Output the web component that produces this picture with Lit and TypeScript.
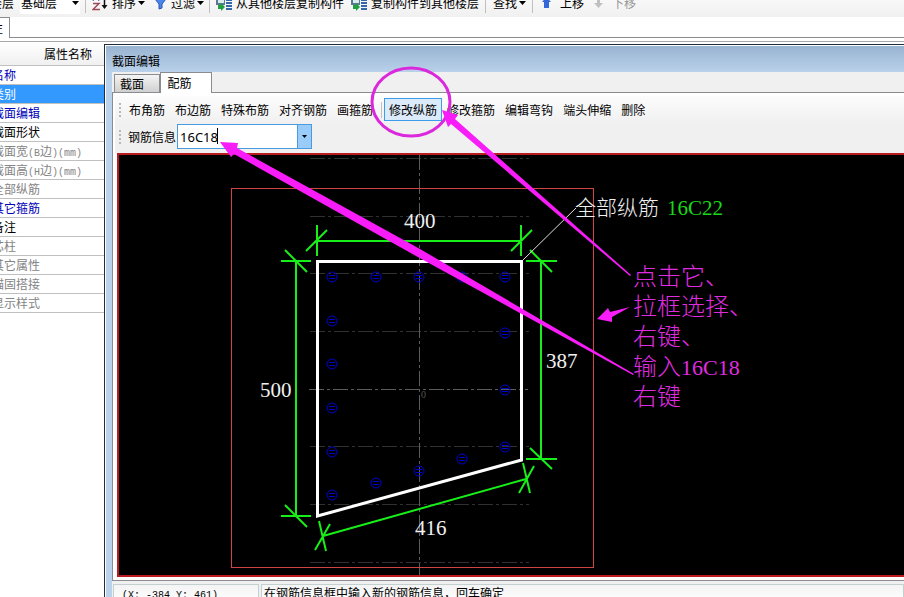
import { LitElement, html, svg, css } from "lit";
import { customElement } from "lit/decorators.js";

const PROPERTIES: { name: unknown; tone: string }[] = [
  { name: "名称", tone: "blue" },
  { name: "类别", tone: "selected" },
  { name: "截面编辑", tone: "blue" },
  { name: "截面形状", tone: "black" },
  { name: html`截面宽<i>(B</i>边<i>)(mm)</i>`, tone: "gray" },
  { name: html`截面高<i>(H</i>边<i>)(mm)</i>`, tone: "gray" },
  { name: "全部纵筋", tone: "gray" },
  { name: "其它箍筋", tone: "blue" },
  { name: "备注", tone: "black" },
  { name: "芯柱", tone: "gray" },
  { name: "其它属性", tone: "gray" },
  { name: "锚固搭接", tone: "gray" },
  { name: "显示样式", tone: "gray" },
];

const BARS: [number, number][] = [
  [332, 277], [376, 277], [419, 277], [462, 277], [505, 277],
  [332, 321], [332, 364], [332, 408], [332, 452], [332, 495],
  [505, 333], [505, 390], [505, 447],
  [462, 459], [419, 471], [376, 483],
];

const GRID_ROWS = [158, 216, 273, 331, 446, 504, 562];

@customElement("section-canvas")
export class SectionCanvas extends LitElement {
  static styles = css`
    :host {
      display: block;
      position: relative;
      z-index: 2;
      background: #000;
      border: 2px solid #b81c20;
      border-right: 0;
      pointer-events: none;
    }
    svg {
      display: block;
      position: absolute;
      left: 0;
      top: 0;
      overflow: visible;
    }
    text {
      font-family: "Liberation Serif", "Noto Sans CJK SC", serif;
      font-weight: 300;
      font-size: 21px;
      fill: #f0f0f0;
    }
    .green { fill: #18d818; }
    .origin { font-size: 10px; fill: #555; }
    .note { font-size: 24px; fill: #e02ce0; }
    .latin { font-size: 22px; }
    .grid { stroke: #303030; stroke-dasharray: 15 3 3 3; }
    .axis { stroke: #5c5c5c; stroke-dasharray: 15 3 3 3; }
    .frame { fill: none; stroke: #d04444; }
    .outline { fill: none; stroke: #fff; stroke-width: 3; }
    .dim { fill: none; stroke: #18ee18; stroke-width: 2; }
    .leader { stroke: #e0e0e0; }
    .bar { fill: none; stroke: #0000d0; }
    .arrow { fill: #f81cf8; }
    .ring { fill: none; stroke: #dc28dc; stroke-width: 3; }
  `;

  render() {
    return html`
      <svg width="785" height="420" viewBox="119 155 785 420" role="img" aria-label="截面">
        ${GRID_ROWS.map((y) => svg`<path class="grid" d="M310 ${y}.5H529" />`)}
        <path class="axis" d="M309 389.5H528M419.5 155V575" />
        <text class="origin" x="421" y="398">0</text>
        ${BARS.map(
          ([x, y]) => svg`<g class="bar">
            <circle cx=${x} cy=${y} r="5" />
            <path d="M${x - 3} ${y - 2}.5h6M${x - 3} ${y + 1}.5h6" />
          </g>`
        )}
        <rect class="frame" x="231.5" y="188.5" width="362" height="379" />
        <path class="outline" d="M317.500 261.500H521.500V460L317.500 516Z" />
        <path
          class="dim"
          d="M317 241H521M317 225V256M306 251L327 230M521 225V256M511 251L532 230
             M296 261V516M281 261H311M285 250L307 272M281 516H311M285 505L307 527
             M541 261V459M526 261H557M530 250L552 272M526 459H557M530 448L552 469
             M323 536L526 479M319 521L326 551M315 550L330 524M523 463L530 493M519 493L534 466"
        />
        <path class="leader" d="M523 260L576 208" />
        <text x="404" y="228">400</text>
        <text x="260" y="397">500</text>
        <text x="546" y="368">387</text>
        <text x="415" y="535">416</text>
        <text x="575" y="215">全部纵筋</text>
        <text class="green" x="667" y="215">16C22</text>
        <ellipse class="ring" cx="411" cy="102" rx="39" ry="34" />
        <path class="arrow" d="M442 110L458 115L455 119L631 275L630 276L451 124L448 127Z" />
        <path class="arrow" d="M220 142L238 143L237 148L420 249L634 374L633 375L416 256L234 154L231 157Z" />
        <path class="arrow" d="M597 319L608 308L610 312L630 307L612 317L612 322Z" />
        <text class="note" x="633" y="285">点击它、</text>
        <text class="note" x="633" y="315">拉框选择、</text>
        <text class="note" x="633" y="345">右键、</text>
        <text class="note" x="633" y="375">输入<tspan class="latin">16C18</tspan></text>
        <text class="note" x="633" y="405">右键</text>
      </svg>
    `;
  }
}

const caret = html`<svg class="caret" width="7" height="4" viewBox="0 0 7 4"><path d="M0 0h7L3.500 4z" /></svg>`;

const sortIcon = html`<svg width="16" height="16" viewBox="0 0 16 16" fill="none">
  <path d="M1 6L4 0L7 6M2 4h4" stroke="#3850b0" />
  <path d="M1 8.500h6L1 14.500h7" stroke="#a04858" stroke-width="1.500" />
  <path d="M12.500 1v12" stroke="#111" stroke-width="1.500" />
  <path d="M9.500 10h6L12.500 14z" fill="#111" />
</svg>`;

const funnelIcon = html`<svg width="13" height="14" viewBox="0 0 13 14">
  <path d="M1 1h11v2L8 8v4l-3 1V8L1 3z" fill="#4d86ea" stroke="#2456b8" />
</svg>`;

const copyIcon = html`<svg width="16" height="16" viewBox="0 0 16 16">
  <path d="M0 2h9v8H0z" fill="#5a7890" />
  <path d="M2 4h6v4H2z" fill="#d8ecf0" />
  <path d="M10 1h6v2h-6zM10 4h6v2h-6zM10 7h6v2h-6zM10 10h6v2h-6zM10 13h6v2h-6z" fill="#3468a8" />
  <path d="M2 10h3v-2l4 4l-4 4v-2H2z" fill="#20a040" />
</svg>`;

const upIcon = html`<svg width="9" height="12" viewBox="0 0 9 12">
  <path d="M4.500 0L9 5H7v6H2V5H0z" fill="#3468d8" />
</svg>`;

const downIcon = html`<svg width="9" height="12" viewBox="0 0 9 12">
  <path d="M4.500 11L9 6H6V1H3v5H0z" fill="#c0c0c0" />
</svg>`;

@customElement("app-root")
export class AppRoot extends LitElement {
  static styles = css`
    :host {
      display: flex;
      flex-direction: column;
      height: 100vh;
      overflow: hidden;
      background: #fff;
      color: #000;
      font: 12px/16px "Noto Sans CJK SC", sans-serif;
    }
    * { box-sizing: border-box; }
    button, input, select {
      margin: 0;
      padding: 0;
      border: 0;
      background: none;
      color: inherit;
      font: inherit;
      white-space: nowrap;
      appearance: none;
    }
    i {
      font: 10px/12px "Liberation Mono", monospace;
    }
    svg { display: block; flex: none; }
    .caret { fill: #000; }

    .main-bar {
      display: flex;
      flex: none;
      align-items: center;
      height: 28px;
      margin-top: -11px;
      background: linear-gradient(#fdfdfd, #f0f0f0);
      white-space: nowrap;
    }
    .floor-label { margin-left: -10px; }
    .floor {
      display: flex;
      align-items: center;
      width: 60px;
      height: 22px;
      margin: 0 4px 0 6px;
      background: #fff;
    }
    .floor select { width: 52px; padding-left: 1px; }
    .main-bar button {
      display: flex;
      align-items: center;
      gap: 4px;
      padding: 0 4px 0 5px;
    }
    .main-bar button .caret { margin-left: -2px; }
    .main-bar .wide { padding-right: 2px; }
    .main-bar .move { gap: 9px; padding: 0 3px 0 7px; }
    .main-bar .off { color: #969696; }
    .rule {
      flex: none;
      width: 1px;
      height: 20px;
      background: #c0c0c0;
      margin: 0 1px;
    }
    .rule.loose { margin: 0 2px; }

    .strip {
      display: flex;
      flex: none;
      height: 21px;
      border-bottom: 1px solid #8a8c90;
    }
    .strip-tab {
      width: 10px;
      height: 21px;
      overflow: hidden;
      border-top: 1px solid #8a8c90;
      border-right: 1px solid #8a8c90;
      background: #fff;
      text-indent: -9px;
      line-height: 20px;
    }
    .below {
      display: flex;
      flex: 1;
      min-height: 0;
      margin-top: 3px;
      border-top: 1px solid #a8a8a8;
    }

    .props {
      flex: none;
      width: 104px;
      overflow: hidden;
    }
    table {
      width: 112px;
      margin-left: -8px;
      border-collapse: separate;
      border-spacing: 0;
      white-space: nowrap;
    }
    th {
      height: 24px;
      padding: 0 12px 0 0;
      border-bottom: 1px solid #c0c0c0;
      background: linear-gradient(#fff, #f0f0f0);
      font-weight: 400;
      text-align: right;
    }
    td {
      height: 19px;
      padding: 0;
      border-bottom: 1px solid #c0c0c0;
    }
    .blue { color: #0000b8; }
    .gray { color: #848484; }
    .selected { background: #3399ff; color: #fff; }

    .window {
      display: flex;
      flex: 1;
      flex-direction: column;
      min-width: 0;
      margin-top: 2px;
      padding-left: 7px;
      border-top: 1px solid #202c3c;
      border-left: 1px solid #202c3c;
      background: #b9d1ea;
      box-shadow: inset 1px 1px #fff;
    }
    .title {
      flex: none;
      height: 26px;
      margin: 1px 0 0 -6px;
      padding: 7px 0 0 6px;
      background: linear-gradient(#99b4d1, #b9d1ea);
      font-size: 12px;
      font-weight: 400;
    }
    .tabs {
      display: flex;
      flex: none;
      align-items: flex-end;
      height: 21px;
      padding-left: 2px;
      background: linear-gradient(#8a8c90, #8a8c90) bottom / 100% 1px no-repeat #f0f0f0;
    }
    .tab {
      height: 19px;
      width: 46px;
      padding-right: 10px;
      border: 1px solid #8a8c90;
      background: linear-gradient(#f4f4f4, #d0d0d0);
    }
    .tab.current {
      height: 21px;
      width: 52px;
      padding-right: 13px;
      border-bottom: 0;
      background: #fff;
    }
    .panel {
      display: flex;
      flex: 1;
      flex-direction: column;
      min-height: 0;
      padding: 3px 0 0 4px;
      border-left: 1px solid #8a8c90;
      border-bottom: 1px solid #8a8c90;
      background: #fff;
    }
    .tools {
      flex: none;
      height: 57px;
      margin-left: -2px;
      background: linear-gradient(#fcfcfd, #f0f0f0 50%);
    }
    .row {
      display: flex;
      align-items: center;
      height: 27px;
      padding-left: 4px;
    }
    .grip {
      flex: none;
      width: 2px;
      height: 14px;
      background: repeating-linear-gradient(#b8b8b8 0 2px, transparent 2px 4px);
    }
    .first .grip { margin-right: 3px; }
    .tool {
      flex: none;
      height: 23px;
      padding: 0 5px;
    }
    .active {
      padding: 0 4px;
      border: 1px solid #3c9cec;
      background: #dcebfa;
    }
    .split { width: 1px; height: 16px; margin: 0 2px 0 3px; background: #c0c0c0; }
    .info-label { margin: 0 1px 0 7px; }
    .field {
      display: flex;
      position: relative;
      width: 135px;
      height: 25px;
      border: 1px solid #4a9ae0;
      background: #fff;
    }
    .field input {
      flex: 1;
      min-width: 0;
      padding-left: 2px;
      font: 13px/20px "Noto Sans", sans-serif;
      outline: 0;
    }
    .field button {
      display: flex;
      align-items: center;
      justify-content: center;
      width: 14px;
      border-left: 1px solid #4a9ae0;
      background: #99ccf8;
    }
    .field .caret { width: 5px; height: 3px; }
    .cursor {
      position: absolute;
      left: 39px;
      top: 3px;
      width: 1px;
      height: 16px;
      background: #000;
    }
    section-canvas { flex: 1; margin-bottom: 3px; }

    .status {
      display: flex;
      flex: none;
      height: 16px;
      padding: 3px 0 0 1px;
      gap: 2px;
      overflow: hidden;
      background: #f0f0f0;
      white-space: nowrap;
    }
    .cell {
      flex: none;
      width: 146px;
      height: 22px;
      padding-left: 8px;
      border: 1px solid #c4d0d0;
      background: linear-gradient(#f4f4f4, #fff);
    }
    .cell.message { flex: 1; padding-left: 2px; }
  `;

  render() {
    return html`
      <nav class="main-bar">
        <label class="floor-label" for="floor">楼层</label>
        <span class="floor">
          <select id="floor"><option>基础层</option></select>${caret}
        </span>
        <span class="rule"></span>
        <button>${sortIcon}排序${caret}</button>
        <button>${funnelIcon}过滤${caret}</button>
        <span class="rule"></span>
        <button class="wide">${copyIcon}从其他楼层复制构件</button>
        <button>${copyIcon}复制构件到其他楼层</button>
        <span class="rule loose"></span>
        <button>查找${caret}</button>
        <span class="rule loose"></span>
        <button class="move">${upIcon}上移</button>
        <button class="move off">${downIcon}下移</button>
      </nav>
      <div class="strip"><div class="strip-tab">性</div></div>
      <div class="below">
        <aside class="props">
          <table>
            <thead><tr><th>属性名称</th></tr></thead>
            <tbody>
              ${PROPERTIES.map((p) => html`<tr><td class=${p.tone}>${p.name}</td></tr>`)}
            </tbody>
          </table>
        </aside>
        <main class="window">
          <h1 class="title">截面编辑</h1>
          <div class="tabs" role="tablist">
            <button class="tab" role="tab">截面</button>
            <button class="tab current" role="tab" aria-selected="true">配筋</button>
          </div>
          <div class="panel">
            <div class="tools">
              <div class="row first">
                <span class="grip"></span>
                ${["布角筋", "布边筋", "特殊布筋", "对齐钢筋", "画箍筋"].map(
                  (t) => html`<button class="tool">${t}</button>`
                )}
                <span class="split"></span>
                <button class="tool active">修改纵筋</button>
                ${["修改箍筋", "编辑弯钩", "端头伸缩", "删除"].map(
                  (t) => html`<button class="tool">${t}</button>`
                )}
              </div>
              <div class="row">
                <span class="grip"></span>
                <label class="info-label" for="info">钢筋信息</label>
                <span class="field">
                  <input id="info" .value=${"16C18"} />
                  <span class="cursor"></span>
                  <button aria-label="钢筋信息列表">${caret}</button>
                </span>
              </div>
            </div>
            <section-canvas></section-canvas>
          </div>
          <footer class="status">
            <span class="cell"><i>(X: -384 Y: 461)</i></span>
            <span class="cell message">在钢筋信息框中输入新的钢筋信息，回车确定</span>
          </footer>
        </main>
      </div>
    `;
  }
}
